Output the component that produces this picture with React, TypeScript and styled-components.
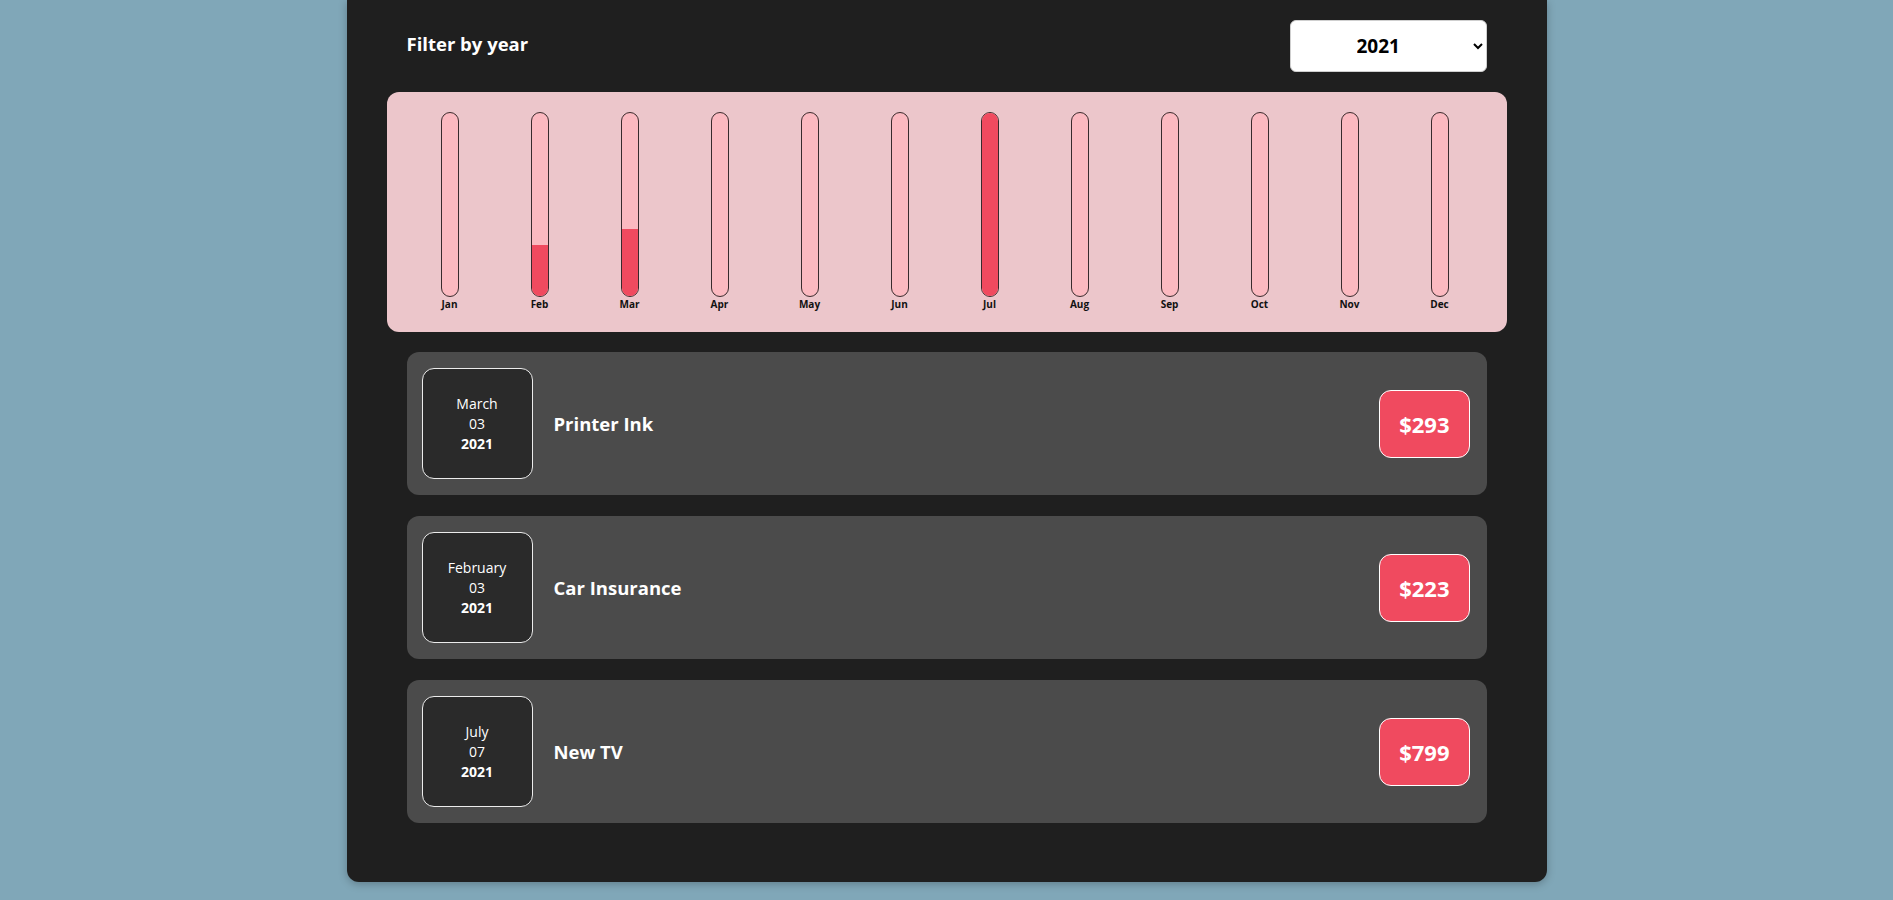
import React from "react";
import styled, { createGlobalStyle } from "styled-components";

const GlobalStyle = createGlobalStyle`
  html, body {
    margin: 0;
    padding: 0;
    background: #80a7b8;
    font-family: "Open Sans", "Noto Sans", sans-serif;
  }
  body {
    padding-bottom: 16px;
  }
  * { box-sizing: border-box; }
`;

const Card = styled.section`
  width: 1200px;
  margin: 0 auto;
  padding: 20px 40px 59px;
  background: #1f1f1f;
  border-radius: 0 0 12px 12px;
  box-shadow: 0 2px 8px rgba(0, 0, 0, 0.25);
`;

const FilterRow = styled.div`
  display: flex;
  align-items: center;
  justify-content: space-between;
  height: 52px;
  padding: 0 20px;
`;

const FilterLabel = styled.label`
  color: #ffffff;
  font-weight: 700;
  font-size: 18.5px;
  margin-bottom: 6px;
`;

const YearSelect = styled.select`
  width: 197px;
  height: 52px;
  padding: 0 10px 0 62px;
  font-family: "Open Sans", "Noto Sans", sans-serif;
  font-size: 19px;
  font-weight: 700;
  color: #000;
  background: #ffffff;
  border: 1px solid #cfcfcf;
  border-radius: 6px;
`;

const Chart = styled.div`
  margin-top: 20px;
  height: 240px;
  padding: 20px 22px 20px 18px;
  border-radius: 12px;
  background: #ecc6cb;
  display: grid;
  grid-template-columns: repeat(12, 1fr);
`;

const BarColumn = styled.div`
  display: flex;
  flex-direction: column;
  align-items: center;
  height: 100%;
`;

const BarTrack = styled.div`
  flex: 1;
  width: 18px;
  border: 1px solid #3a2a2c;
  border-radius: 12px;
  background: #fbb9c0;
  overflow: hidden;
  display: flex;
  flex-direction: column;
  justify-content: flex-end;
`;

const BarFill = styled.div`
  width: 100%;
  background: #f04a5f;
`;

const BarLabel = styled.div`
  font-size: 10px;
  font-weight: 700;
  line-height: 15px;
  color: #111;
`;

const List = styled.ul`
  list-style: none;
  margin: 20px 0 0;
  padding: 0 20px;
  display: flex;
  flex-direction: column;
  gap: 21px;
`;

const Item = styled.li`
  display: flex;
  align-items: center;
  height: 143px;
  padding: 16px 17px 16px 15px;
  background: #4b4b4b;
  border-radius: 12px;
`;

const DateBox = styled.div`
  width: 111px;
  height: 111px;
  flex-shrink: 0;
  display: flex;
  flex-direction: column;
  align-items: center;
  justify-content: center;
  background: #2a2a2a;
  border: 1px solid #ececec;
  border-radius: 12px;
  color: #ffffff;
  font-size: 14px;
  line-height: 20px;
`;

const DateLine = styled.div<{ $bold?: boolean }>`
  font-weight: ${(p) => (p.$bold ? 700 : 400)};
`;

const Title = styled.h2`
  flex: 1;
  margin: 0 0 0 21px;
  color: #ffffff;
  font-size: 18.5px;
  font-weight: 700;
`;

const Price = styled.div`
  padding: 19px 19px;
  line-height: 28px;
  font-size: 22px;
  font-weight: 700;
  color: #ffffff;
  background: #f04a5f;
  border: 1px solid #ffffff;
  border-radius: 12px;
`;

const months = ["Jan", "Feb", "Mar", "Apr", "May", "Jun", "Jul", "Aug", "Sep", "Oct", "Nov", "Dec"];

const expenses = [
  { month: "March", day: "03", year: "2021", title: "Printer Ink", amount: 293, m: 2 },
  { month: "February", day: "03", year: "2021", title: "Car Insurance", amount: 223, m: 1 },
  { month: "July", day: "07", year: "2021", title: "New TV", amount: 799, m: 6 },
];

export default function App() {
  const totals = months.map((_, i) =>
    expenses.filter((e) => e.m === i).reduce((s, e) => s + e.amount, 0)
  );
  const max = Math.max(...totals);
  return (
    <>
      <GlobalStyle />
      <Card>
        <FilterRow>
          <FilterLabel>Filter by year</FilterLabel>
          <YearSelect defaultValue="2021">
            <option value="2022">2022</option>
            <option value="2021">2021</option>
            <option value="2020">2020</option>
            <option value="2019">2019</option>
          </YearSelect>
        </FilterRow>
        <Chart>
          {months.map((m, i) => (
            <BarColumn key={m}>
              <BarTrack>
                <BarFill style={{ height: `${max ? (totals[i] / max) * 100 : 0}%` }} />
              </BarTrack>
              <BarLabel>{m}</BarLabel>
            </BarColumn>
          ))}
        </Chart>
        <List>
          {expenses.map((e) => (
            <Item key={e.title}>
              <DateBox>
                <DateLine>{e.month}</DateLine>
                <DateLine>{e.day}</DateLine>
                <DateLine $bold>{e.year}</DateLine>
              </DateBox>
              <Title>{e.title}</Title>
              <Price>${e.amount}</Price>
            </Item>
          ))}
        </List>
      </Card>
    </>
  );
}
